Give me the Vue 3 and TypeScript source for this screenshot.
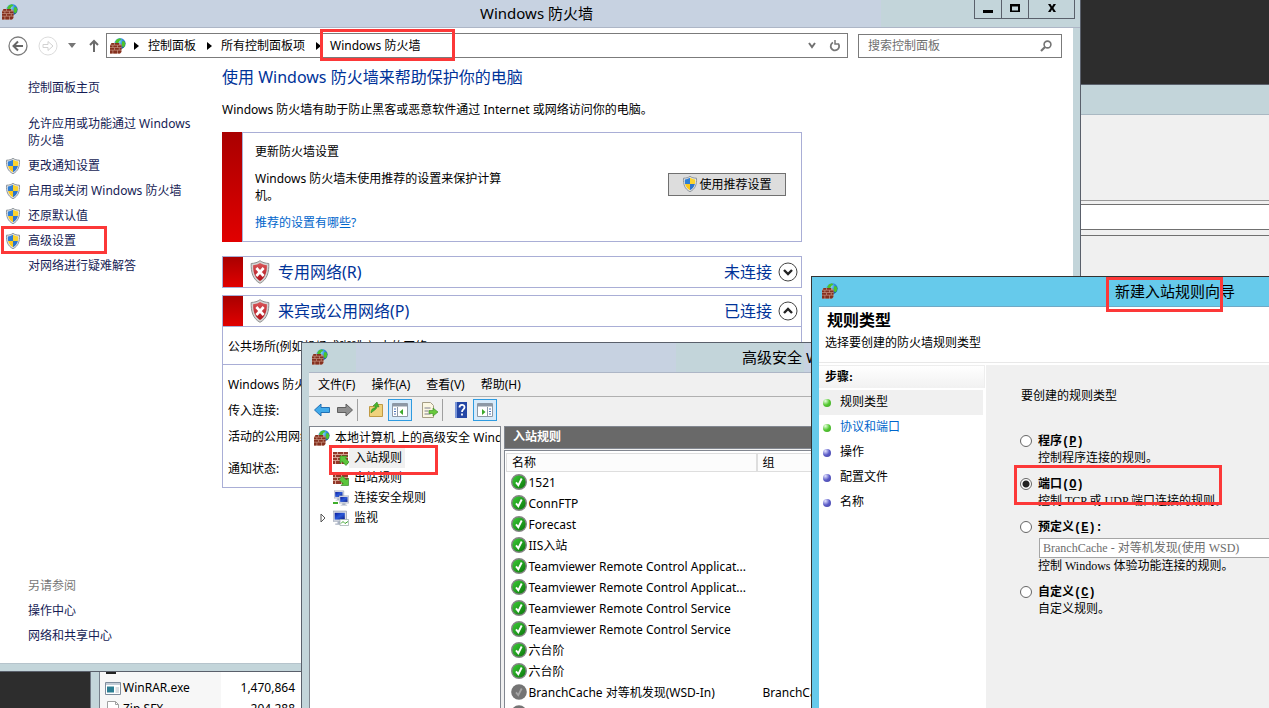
<script setup lang="ts">
import { ref } from 'vue'

interface TaskLink { label: string; shield: boolean }
interface Rule { name: string; group: string; on: boolean }
interface RuleKind { id: string; text: string; key: string; tail: string; note: string }

const tasks: TaskLink[] = [
  { label: '更改通知设置', shield: true },
  { label: '启用或关闭 Windows 防火墙', shield: true },
  { label: '还原默认值', shield: true },
  { label: '高级设置', shield: true },
  { label: '对网络进行疑难解答', shield: false },
]

const menus: string[] = ['文件(F)', '操作(A)', '查看(V)', '帮助(H)']

const rules: Rule[] = [
  { name: '1521', group: '', on: true },
  { name: 'ConnFTP', group: '', on: true },
  { name: 'Forecast', group: '', on: true },
  { name: 'IIS入站', group: '', on: true },
  { name: 'Teamviewer Remote Control Applicat...', group: '', on: true },
  { name: 'Teamviewer Remote Control Applicat...', group: '', on: true },
  { name: 'Teamviewer Remote Control Service', group: '', on: true },
  { name: 'Teamviewer Remote Control Service', group: '', on: true },
  { name: '六台阶', group: '', on: true },
  { name: '六台阶', group: '', on: true },
  { name: 'BranchCache 对等机发现(WSD-In)', group: 'BranchCache - 对等机发现', on: false },
  { name: '', group: '', on: false },
]

const steps: string[] = ['规则类型', '协议和端口', '操作', '配置文件', '名称']

const kinds: RuleKind[] = [
  { id: 'program', text: '程序', key: 'P', tail: '', note: '控制程序连接的规则。' },
  { id: 'port', text: '端口', key: 'O', tail: '', note: '控制 TCP 或 UDP 端口连接的规则。' },
  { id: 'predefined', text: '预定义', key: 'E', tail: ':', note: '控制 Windows 体验功能连接的规则。' },
  { id: 'custom', text: '自定义', key: 'C', tail: '', note: '自定义规则。' },
]
const chosen = ref('port')
const search = ref('')
</script>

<template>
  <div class="desktop">
    <svg class="defs" aria-hidden="true">
      <defs>
        <radialGradient id="g-globe" cx=".35" cy=".3" r=".8"><stop offset="0" stop-color="#9fe4ff" /><stop offset=".5" stop-color="#2f8fe0" /><stop offset="1" stop-color="#123f9a" /></radialGradient>
        <linearGradient id="g-red" x1="0" y1="0" x2="0" y2="1"><stop offset="0" stop-color="#d9575a" /><stop offset="1" stop-color="#b01018" /></linearGradient>
        <linearGradient id="g-green" x1="0" y1="0" x2="1" y2="1"><stop offset="0" stop-color="#3fd03a" /><stop offset="1" stop-color="#087208" /></linearGradient>
        <linearGradient id="g-screen" x1="0" y1="0" x2="1" y2="1"><stop offset="0" stop-color="#0a1c9c" /><stop offset=".5" stop-color="#2a58d8" /><stop offset="1" stop-color="#0c1d86" /></linearGradient>
      </defs>
      <symbol id="firewall" viewBox="0 0 16 16">
        <circle cx="10" cy="5.600" r="5.600" fill="url(#g-globe)" />
        <path d="M5 4L7 1.200l3-1 1.500 1.600-2 1-1 2-2 .7zM12 3.500l2-.6 1.300 2.300-.5 2.600-1.500 2-1.600-2.300z" fill="#4cc32c" />
        <path d="M1.500 5H9l2.500 1.500V14L10 15.500H0V7z" fill="#c08a78" />
        <path d="M1.500 5H4v1.800H1zM4.800 5H9v1.800H4.800zM0 7.500h2.500v1.800H0zM3.300 7.500H7v1.800H3.300zM7.800 7.500h3.700v1.800H7.800zM0 10h4v1.800H0zM4.800 10h4v1.800h-4zM9.600 10h1.900v1.800H9.600zM0 12.500h2.500v3H0zM3.300 12.500H7v3H3.300zM7.800 12.500h3.500V14l-1.300 1.500H7.800z" fill="#85301f" />
      </symbol>
      <symbol id="uac" viewBox="0 0 16 16">
        <path d="M8 .3C6.500 1.600 4 2.200 1.500 2.200 1.200 8 2.500 13 8 15.700c5.500-2.700 6.800-7.700 6.500-13.500C12 2.200 9.500 1.600 8 .3z" fill="#e6e8ea" stroke="#8d949b" stroke-width="1" />
        <path d="M8 1.800C6.600 2.700 5 3.300 2.800 3.400c-.1 1.500 0 3.100.3 4.600H8z" fill="#2f7fd6" />
        <path d="M8 1.800c1.400.9 3 1.500 5.200 1.600.1 1.500 0 3.100-.3 4.600H8z" fill="#fbd32c" />
        <path d="M3.100 8H8v6.300C5.200 12.800 3.700 10.500 3.100 8z" fill="#fbc81c" />
        <path d="M12.900 8H8v6.300c2.800-1.500 4.300-3.800 4.900-6.300z" fill="#2c74cc" />
      </symbol>
      <symbol id="bad" viewBox="0 0 22 24" preserveAspectRatio="none">
        <path d="M11 .7C8.500 2.500 5 3.300 1.300 3.500 1 12 3 19.500 11 23.300c8-3.800 10-11.300 9.700-19.800C17 3.300 13.500 2.500 11 .7z" fill="#d4d4d4" stroke="#8a8a8a" />
        <path d="M11 3C8.800 4.300 6.200 5 3.400 5.300 3.300 12 5 17.800 11 21c6-3.200 7.700-9 7.600-15.700C15.800 5 13.200 4.300 11 3z" fill="url(#g-red)" />
        <path d="M7 8l8 8M15 8l-8 8" stroke="#fff" stroke-width="3" />
      </symbol>
      <symbol id="ok" viewBox="0 0 16 16">
        <circle cx="8" cy="8" r="7.300" fill="url(#g-green)" stroke="#858585" stroke-width="1.400" />
        <path d="M5 8.400l2.300 2.800L10.700 4.500" fill="none" stroke="#fff" stroke-width="1.900" />
      </symbol>
      <symbol id="off" viewBox="0 0 16 16">
        <circle cx="8" cy="8" r="7.800" fill="#747474" />
        <path d="M5 8.400l2.300 2.800L10.700 4.500" fill="none" stroke="#a5a5a5" stroke-width="1.800" />
      </symbol>
      <symbol id="wall" viewBox="0 0 16 16">
        <path d="M0 2h15v12H0z" fill="#d4a090" />
        <path d="M0 2h4v2H0zM5 2h5v2H5zM11 2h4v2h-4zM0 5h2v2H0zM3 5h5v2H3zM9 5h6v2H9zM0 8h4v2H0zM5 8h5v2H5zM11 8h4v2h-4zM0 11h2v3H0zM3 11h5v3H3zM9 11h6v3H9z" fill="#93382a" />
      </symbol>
      <symbol id="pc" viewBox="0 0 16 16">
        <path d="M0 1h12v9H0z" fill="#d9dde6" stroke="#8c96ac" stroke-width=".6" /><path d="M1.500 2.500h9V8.500h-9z" fill="url(#g-screen)" /><path d="M4 10h4v2H4zM2 12h8v1H2z" fill="#a9b2c4" />
      </symbol>
    </svg>

    <section class="back-window" aria-hidden="true">
      <div class="back-title"></div>
      <div class="back-band"></div>
      <div class="back-field"></div>
      <div class="back-band-low"></div>
    </section>

    <section class="files">
      <table>
        <tbody>
          <tr><td class="fname"><svg class="i16" viewBox="0 0 16 16"><path d="M1 4h10v11H1z" fill="#222" /></svg></td><td class="fsize"></td></tr>
          <tr>
            <td class="fname"><svg class="i16" viewBox="0 0 16 16"><path d="M.5 2.500h15v12H.5z" fill="#fff" stroke="#7e8c9c" /><path d="M1 3h14v2H1z" fill="#c3ccd6" /><path d="M2 6.500h7v6H2z" fill="#2d7f94" /><path d="M10.500 8h3.500M10.500 10h3.500M10.500 12h3.500" stroke="#b5bcc4" /></svg><span>WinRAR.exe</span></td>
            <td class="fsize">1,470,864</td>
          </tr>
          <tr>
            <td class="fname"><svg class="i16" viewBox="0 0 16 16"><path d="M2.500.5h8l3 3v12h-11z" fill="#fff" stroke="#a0a0a0" /><path d="M10.500.5v3h3" fill="none" stroke="#a0a0a0" /></svg><span>Zip.SFX</span></td>
            <td class="fsize">204,288</td>
          </tr>
        </tbody>
      </table>
    </section>

    <section class="cp">
      <header class="cp-title">
        <svg class="i16 app"><use href="#firewall" /></svg>
        <h1>Windows 防火墙</h1>
        <div class="winbtns">
          <button aria-label="最小化"><svg viewBox="0 0 12 10"><path d="M1 7h10v3H1z" /></svg></button>
          <button aria-label="最大化"><svg viewBox="0 0 12 10"><path d="M1 1h10v8H1zM3 3.500v4h6v-4z" fill-rule="evenodd" /></svg></button>
          <button class="wide" aria-label="关闭"><svg viewBox="0 0 12 10"><path d="M2 1h2.500L6 3.400 7.500 1H10L7.400 5 10 9H7.500L6 6.600 4.500 9H2l2.600-4z" /></svg></button>
        </div>
      </header>
      <div class="cp-page">
        <nav class="cp-nav">
          <button aria-label="后退"><svg width="20" height="20" viewBox="0 0 20 20" fill="none"><circle cx="10" cy="10" r="9" stroke="#7d7d7d" stroke-width="1.300" /><path d="M15 10H6M10 5.500L5.500 10l4.500 4.500" stroke="#666" stroke-width="2" /></svg></button>
          <button aria-label="前进"><svg width="20" height="20" viewBox="0 0 20 20" fill="none"><circle cx="10" cy="10" r="9" stroke="#dcdcdc" /><path d="M5 8.500h5v-3l5 4.500-5 4.500v-3H5z" stroke="#d2d2d2" /></svg></button>
          <button class="hist" aria-label="历史"><svg width="8" height="5" viewBox="0 0 8 5"><path d="M0 0h8L4 5z" fill="#767676" /></svg></button>
          <button class="up" aria-label="上移"><svg width="10" height="14" viewBox="0 0 10 14" fill="none" stroke="#6b6b6b" stroke-width="2"><path d="M5 13V2M1 6l4-4 4 4" /></svg></button>
          <div class="address">
            <svg class="i16"><use href="#firewall" /></svg>
            <svg class="tri" viewBox="0 0 5 8"><path d="M0 0l5 4-5 4z" /></svg>
            <a href="#">控制面板</a>
            <svg class="tri" viewBox="0 0 5 8"><path d="M0 0l5 4-5 4z" /></svg>
            <a href="#">所有控制面板项</a>
            <svg class="tri" viewBox="0 0 5 8"><path d="M0 0l5 4-5 4z" /></svg>
            <a href="#">Windows 防火墙</a>
            <button class="drop" aria-label="展开"><svg width="8" height="7" viewBox="0 0 8 7" fill="none" stroke="#707070" stroke-width="2"><path d="M1 1l3 4 3-4" /></svg></button>
            <button aria-label="刷新"><svg width="12" height="12" viewBox="0 0 12 12" fill="none" stroke="#777" stroke-width="1.800"><path d="M4 2.500A4.200 4.200 0 1 0 9.500 4" /><path d="M6 0v4h4" stroke-width="1.500" /></svg></button>
          </div>
          <label class="search">
            <input v-model="search" type="text" placeholder="搜索控制面板" aria-label="搜索控制面板" />
            <svg width="12" height="12" viewBox="0 0 12 12" fill="none" stroke="#747474"><circle cx="7.500" cy="4.500" r="3.400" stroke-width="1.600" /><path d="M5 7L1 11" stroke-width="2.200" /></svg>
          </label>
        </nav>

        <div class="cp-body">
          <aside class="side">
            <a href="#" class="home">控制面板主页</a>
            <a href="#" class="allow">允许应用或功能通过 Windows 防火墙</a>
            <a v-for="t in tasks" :key="t.label" href="#" class="task">
              <svg v-if="t.shield" class="i16"><use href="#uac" /></svg><i v-else class="i16"></i>{{ t.label }}
            </a>
            <div class="see">
              <p>另请参阅</p>
              <a href="#">操作中心</a>
              <a href="#">网络和共享中心</a>
            </div>
          </aside>

          <main class="main">
            <h2>使用 Windows 防火墙来帮助保护你的电脑</h2>
            <p class="lead">Windows 防火墙有助于防止黑客或恶意软件通过 Internet 或网络访问你的电脑。</p>
            <div class="alert">
              <div class="bar"></div>
              <div class="alert-text">
                <p>更新防火墙设置</p>
                <p class="warn">Windows 防火墙未使用推荐的设置来保护计算机。</p>
                <a href="#">推荐的设置有哪些?</a>
              </div>
              <button class="use"><svg class="i16"><use href="#uac" /></svg>使用推荐设置</button>
            </div>
            <div class="net">
              <div class="net-head">
                <div class="bar"></div><svg class="bad"><use href="#bad" /></svg><h3>专用网络(R)</h3><span>未连接</span>
                <button aria-label="展开专用网络"><svg viewBox="0 0 20 20" fill="none"><circle cx="10" cy="10" r="9" stroke="#444" /><path d="M6 8l4 4 4-4" stroke="#222" stroke-width="2.400" /></svg></button>
              </div>
            </div>
            <div class="net">
              <div class="net-head">
                <div class="bar"></div><svg class="bad"><use href="#bad" /></svg><h3>来宾或公用网络(P)</h3><span>已连接</span>
                <button aria-label="收起来宾或公用网络"><svg viewBox="0 0 20 20" fill="none"><circle cx="10" cy="10" r="9" stroke="#444" /><path d="M6 12l4-4 4 4" stroke="#222" stroke-width="2.400" /></svg></button>
              </div>
              <p class="place">公共场所(例如机场或咖啡店)中的网络</p>
              <div class="facts">
                <p>Windows 防火墙状态:</p>
                <p>传入连接:</p>
                <p>活动的公用网络:</p>
                <p class="notify">通知状态:</p>
              </div>
            </div>
          </main>
        </div>
      </div>
    </section>

    <section class="mmc">
      <header class="mmc-title"><svg class="i16 app"><use href="#firewall" /></svg><h1>高级安全 Windows 防火墙</h1></header>
      <div class="mmc-page">
        <nav class="menu"><button v-for="m in menus" :key="m">{{ m }}</button></nav>
        <div class="tools">
          <button aria-label="后退"><svg viewBox="0 0 16 16"><path d="M.5 8L7 2v3.500h8.500v5H7V14z" fill="#41aaea" stroke="#2170b5" /></svg></button>
          <button aria-label="前进"><svg viewBox="0 0 16 16"><path d="M15.500 8L9 2v3.500H.5v5H9V14z" fill="#8f8f8f" stroke="#5f5f5f" /></svg></button>
          <i class="rule"></i>
          <button aria-label="上一级"><svg viewBox="0 0 16 16"><path d="M1.500 4.500h5l1.500-2h6.500v12h-13z" fill="#f0d27c" stroke="#c09a44" /><path d="M3 11c0-4 2-5 4-5V3.500L5 4l4-4 2 5-2-.5c0 3-3 3.500-6 6.500z" fill="#46b82d" stroke="#287c1a" stroke-width=".5" /></svg></button>
          <button class="on" aria-label="控制台树"><svg viewBox="0 0 16 16"><path d="M.5 1.500h15v13H.5z" fill="#fff" stroke="#8d98a5" /><path d="M1 2h14v2.500H1z" fill="#8d98a5" /><path d="M5.500 5v9" stroke="#8d98a5" /><path d="M2 7h2M2 9.500h2M2 12h2" stroke="#4a72b8" /><path d="M11 7v6L7.500 10z" fill="#3ca92c" /></svg></button>
          <button class="gap" aria-label="导出列表"><svg viewBox="0 0 16 16"><path d="M.5.500h8l3 3v12H.5z" fill="#fbf7e2" stroke="#a59e85" /><path d="M2.500 6h6M2.500 9h4M2.500 12h6" stroke="#7c7c8e" /><path d="M7 8.500h4V6l5 4-5 4v-2.500H7z" fill="#69c93c" stroke="#368a1e" stroke-width=".6" /></svg></button>
          <i class="rule"></i>
          <button aria-label="帮助"><svg viewBox="0 0 16 16"><path d="M2 0h12v16H2z" fill="#2446a5" /><path d="M2 0h2v16H2z" fill="#7b97d8" /><path d="M6.500 5.500c0-3.500 5-3.500 5-.3 0 2.300-2.500 2-2.500 4.800M9 11.500v2" fill="none" stroke="#fff" stroke-width="1.800" /></svg></button>
          <button class="on" aria-label="操作窗格"><svg viewBox="0 0 16 16"><path d="M.5 1.500h15v13H.5z" fill="#fff" stroke="#8d98a5" /><path d="M1 2h14v2.500H1z" fill="#8d98a5" /><path d="M10.500 5v9" stroke="#8d98a5" /><path d="M12 7h2M12 9.500h2M12 12h2" stroke="#4a72b8" /><path d="M5 7v6l3.500-3z" fill="#3ca92c" /></svg></button>
        </div>
        <div class="panes">
          <div class="tree">
            <button class="root"><svg class="i16"><use href="#firewall" /></svg>本地计算机 上的高级安全 Windows 防火墙</button>
            <button class="leaf picked"><svg class="i16" viewBox="0 0 16 16"><use href="#wall" /><path d="M13 15.500l-4-4-2 2V6h7.500l-2 2 3.500 4z" fill="#5cc53c" stroke="#27801a" stroke-width=".6" /></svg><span>入站规则</span></button>
            <button class="leaf"><svg class="i16" viewBox="0 0 16 16"><use href="#wall" /><path d="M9.500 6l4 4 2-2v7.500H8l2-2-4-4z" fill="#5cc53c" stroke="#27801a" stroke-width=".6" /></svg><span>出站规则</span></button>
            <button class="leaf"><svg class="i16" viewBox="0 0 16 16"><use href="#pc" width="13" height="13" x="1" y="0" /><use href="#pc" width="13" height="13" x="6" y="5" /><path d="M0 12h5v2H0z" fill="#3fae2c" /></svg><span>连接安全规则</span></button>
            <button class="leaf"><svg class="twist" viewBox="0 0 6 10"><path d="M1 1l4 4-4 4z" fill="#fff" stroke="#555" /></svg><svg class="i16" viewBox="0 0 16 16"><use href="#pc" width="18" height="18" /><path d="M7 9.500h8.500v6H7z" fill="#fff" stroke="#9aa" stroke-width=".7" /><path d="M8 13.500l2-2 2 2 3-2" fill="none" stroke="#3da52e" /></svg><span>监视</span></button>
          </div>
          <div class="result">
            <h2>入站规则</h2>
            <div class="list">
              <table>
                <thead><tr><th class="c-name">名称</th><th>组</th></tr></thead>
                <tbody>
                  <tr v-for="(r, n) in rules" :key="n">
                    <td class="c-name"><div><svg class="i16"><use :href="r.on ? '#ok' : '#off'" /></svg><span>{{ r.name }}</span></div></td>
                    <td>{{ r.group }}</td>
                  </tr>
                </tbody>
              </table>
            </div>
          </div>
        </div>
      </div>
    </section>

    <section class="wizard">
      <header class="wiz-title"><svg class="i16 app"><use href="#firewall" /></svg><h1>新建入站规则向导</h1></header>
      <div class="wiz-page">
        <div class="wiz-head"><h2>规则类型</h2><p>选择要创建的防火墙规则类型</p></div>
        <div class="wiz-body">
          <aside class="steps">
            <h3>步骤:</h3>
            <ol>
              <li v-for="(s, n) in steps" :key="s" :class="{ now: n === 0 }">
                <i :class="n < 2 ? 'ball green' : 'ball blue'"></i>
                <a v-if="n === 1" href="#">{{ s }}</a><span v-else>{{ s }}</span>
              </li>
            </ol>
          </aside>
          <form class="form" @submit.prevent>
            <p class="ask">要创建的规则类型</p>
            <div v-for="k in kinds" :key="k.id" class="kind">
              <input :id="k.id" v-model="chosen" type="radio" name="kind" :value="k.id" />
              <div class="kind-text">
                <label :for="k.id">{{ k.text }}(<u>{{ k.key }}</u>){{ k.tail }}</label>
                <select v-if="k.id === 'predefined'" disabled aria-label="预定义规则"><option>BranchCache - 对等机发现(使用 WSD)</option></select>
                <p>{{ k.note }}</p>
              </div>
            </div>
          </form>
        </div>
      </div>
    </section>

    <i class="mark m-address"></i>
    <i class="mark m-advanced"></i>
    <i class="mark m-inbound"></i>
    <i class="mark m-wizard"></i>
    <i class="mark m-port"></i>
  </div>
</template>

<style>
html, body { background: #2d2d2d; overflow: hidden; }
</style>

<style scoped>
.desktop { position: relative; height: 100vh; overflow: hidden; background: #2d2d2d; color: #000; font: 12px/17px "Noto Sans", "Noto Sans CJK SC", sans-serif; }
.desktop * { box-sizing: border-box; }
h1, h2, h3, p, ol { margin: 0; padding: 0; font-weight: 400; }
ol { list-style: none; }
a { text-decoration: none; color: inherit; }
button { font: inherit; color: inherit; background: none; border: 0; padding: 0; margin: 0; display: flex; align-items: center; }
svg { display: block; flex: none; }
table { border-collapse: collapse; border-spacing: 0; }
.defs { position: absolute; width: 0; height: 0; }
.i16 { width: 16px; height: 16px; flex: none; }

.back-window { position: absolute; left: 1080px; top: 84px; right: 0; bottom: 0; background: #f0f0f0; border-top: 1px solid #5a606b; display: flex; flex-direction: column; }
.back-title { height: 30px; background: #c3d5da; border-bottom: 1px solid #a9b8c2; }
.back-band { height: 86px; border-bottom: 1px solid #9a9a9a; }
.back-field { height: 26px; margin-top: 3px; background: #fff; border: 1px solid #707070; border-right: 0; }
.back-band-low { height: 6px; border-bottom: 1px solid #707070; }

.files { position: absolute; left: 90px; right: 900px; bottom: 0; height: 40px; background: #fff; border-left: 1px solid #6f7682; overflow: hidden; display: flex; }
.files::before { content: ""; width: 8px; background: #c3d5da; border-right: 1px solid #77808c; }
.files table { height: 63px; margin-top: -12px; }
.files tr { height: 21px; }
.files td { padding: 0; }
.fname { width: 121px; background: #f7f7f7; white-space: nowrap; }
.fname svg { display: inline-block; vertical-align: middle; margin: 0 2px 0 5px; }
.fname span { vertical-align: middle; }
.fsize { width: 74px; text-align: right; }

.cp { position: absolute; left: 0; top: 0; right: 188px; bottom: 36px; display: flex; flex-direction: column; background: #c3d5da; border: solid #5a606b; border-width: 0 1px 1px 0; padding: 0 7px 7px 0; }
.cp-title { height: 28px; margin-right: -7px; padding-right: 7px; flex: none; position: relative; display: flex; justify-content: center; background: linear-gradient(90deg, #c7d2e1 881px, #c3d5da 881px); border-bottom: 1px solid #adb6c6; }
.cp-title h1, .mmc-title h1, .wiz-title h1 { font-size: 15px; line-height: 26px; white-space: nowrap; }
.app { position: absolute; left: 2px; top: 4px; }
.winbtns { position: absolute; right: 5px; top: 0; height: 19px; display: flex; border: 1px solid #5a606b; border-top: 0; }
.winbtns button { width: 27px; justify-content: center; border-right: 1px solid #5a606b; }
.winbtns .wide { width: 45px; border-right: 0; }
.winbtns svg { width: 12px; height: 10px; margin-bottom: 2px; }
.cp-page { flex: 1; min-height: 0; background: #fff; display: flex; flex-direction: column; border-bottom: 1px solid #b6c4cc; }
.cp-nav { display: flex; align-items: center; height: 25px; margin: 5px 11px 0 8px; }
.cp-nav > button { width: 20px; margin-right: 10px; justify-content: center; }
.cp-nav > .hist { width: 8px; margin: 0 13px 0 0; }
.cp-nav > .up { width: 10px; margin-right: 7px; }
.address { flex: 1; height: 25px; border: 1px solid #7b7b7b; display: flex; align-items: center; padding: 0 6px 0 3px; white-space: nowrap; }
.address a { padding-bottom: 1px; }
.address .i16 { margin-right: -3px; }
.tri { width: 5px; height: 8px; margin: 0 9px 0 11px; }
.address .drop { margin: 0 13px 0 auto; }
.search { display: flex; align-items: center; width: 204px; height: 24px; margin-left: 10px; border: 1px solid #7b7b7b; padding: 0 9px; }
.search input { flex: 1; min-width: 0; border: 0; outline: 0; padding: 0; background: none; font: inherit; }
.search input::placeholder { color: #6f6f6f; opacity: 1; }
.cp-body { flex: 1; min-height: 0; display: flex; }
.side { width: 222px; flex: none; display: flex; flex-direction: column; color: #151c55; padding: 21px 20px 19px 28px; }
.home { margin-bottom: 19px; }
.allow { line-height: 17px; margin-bottom: 4px; }
.task { display: flex; align-items: center; gap: 7px; height: 25px; margin-left: -23px; white-space: nowrap; }
.see { margin-top: auto; display: flex; flex-direction: column; gap: 8px; }
.see p { color: #777; }
.main { width: 580px; padding-top: 6px; display: flex; flex-direction: column; }
.main h2 { color: #039; font-size: 16px; line-height: 26px; }
.lead { margin: 11px 0 14px; white-space: nowrap; }
.alert { display: flex; align-items: center; height: 110px; flex: none; border: 1px solid #a9aed6; border-left: 0; }
.alert .bar { width: 21px; align-self: stretch; margin: -1px 0; border-right: 1px solid #a9aed6; }
.bar { background: linear-gradient(#a90000, #e10000); flex: none; }
.alert-text { width: 262px; margin-left: 12px; display: flex; flex-direction: column; gap: 10px; }
.alert-text a { color: #06c; }
.use { margin: 0 15px 6px auto; height: 23px; width: 118px; justify-content: center; gap: 1px; background: #ddd; border: 1px solid #707070; white-space: nowrap; }
.net { margin-top: 14px; border: 1px solid #a9aed6; flex: none; }
.net + .net { margin-top: 7px; }
.net-head { display: flex; align-items: center; height: 30px; color: #039; font-size: 16px; }
.net-head .bar { width: 20px; align-self: stretch; }
.bad { width: 20px; height: 24px; margin: 0 8px 0 7px; }
.net-head h3 { font-size: 16px; flex: 1; }
.net-head button { width: 20px; margin: 0 3px 0 6px; }
.net-head button svg { width: 20px; height: 20px; }
.place { border: solid #a9aed6; border-width: 1px 0; padding: 11px 5px 9px; }
.facts { padding: 11px 5px 10px; display: flex; flex-direction: column; gap: 9px; }
.notify { margin-top: 6px; }

.mmc { position: absolute; left: 301px; top: 342px; right: -91px; bottom: -20px; display: flex; flex-direction: column; border: 1px solid #5a606b; background: #c3d5da; padding: 0 7px; }
.mmc-title { height: 29px; flex: none; margin: 0 -7px; position: relative; display: flex; justify-content: center; background: linear-gradient(90deg, #c3d5da 54px, #c7d2e1 54px 374px, #c3d5da 374px 502px, #c7d2e1 502px); }
.mmc-title h1 { line-height: 28px; }
.mmc-title .app, .wiz-title .app { left: 10px; top: 6px; }
.mmc-page { flex: 1; min-height: 0; background: #f0f0f0; border-top: 1px solid #adb6c6; display: flex; flex-direction: column; }
.menu { display: flex; gap: 16px; height: 24px; padding-left: 9px; border-bottom: 1px solid #b0b0b0; }
.tools { display: flex; align-items: center; height: 26px; padding-left: 4px; }
.tools button { width: 18px; height: 22px; justify-content: center; margin-right: 5px; }
.tools svg { width: 16px; height: 16px; }
.tools .on { width: 24px; margin-left: -2px; background: #d6eafa; border: 1px solid #2f9be0; }
.tools .gap { margin-left: 4px; }
.rule { width: 1px; height: 22px; background: #a0a0a0; margin: 0 9px 0 -2px; }
.panes { flex: 1; min-height: 0; display: flex; gap: 3px; padding-top: 3px; }
.tree { width: 192px; flex: none; background: #fff; border: 1px solid #828790; overflow: hidden; display: flex; flex-direction: column; }
.tree button { white-space: nowrap; flex: none; height: 20px; }
.tree .root { margin-left: 4px; gap: 5px; height: 21px; }
.leaf { padding-left: 23px; position: relative; }
.leaf span { padding: 0 3px 0 5px; line-height: 20px; }
.picked span { background: #f0f0f0; }
.twist { position: absolute; left: 10px; width: 6px; height: 10px; }
.result { flex: 1; min-width: 0; display: flex; flex-direction: column; }
.result h2 { height: 23px; font-size: 12px; line-height: 20px; padding-left: 8px; color: #fff; font-weight: 700; background: #696969; border: 1px solid #828790; flex: none; }
.list { flex: 1; min-height: 0; margin-top: 1px; background: #fff; border: 1px solid #828790; padding: 2px 0 0 1px; overflow: hidden; }
.list table { width: 100%; table-layout: fixed; }
.list th { height: 18px; line-height: 17px; padding: 0 5px; text-align: left; font-weight: 400; background: #fcfcfc; border: solid #dedede; border-width: 1px 2px 1px 1px; }
.list .c-name { width: 250px; }
.list td { height: 21px; padding: 0 6px; white-space: nowrap; overflow: hidden; }
.list td.c-name { padding: 0 0 0 4px; }
.c-name div { display: flex; align-items: center; gap: 2px; }

.wizard { position: absolute; left: 811px; top: 276px; right: -270px; bottom: -20px; display: flex; flex-direction: column; background: #66caeb; border: 1px solid #333; padding: 0 7px; font-family: "Liberation Serif", "Noto Sans CJK SC", serif; }
.wiz-title { position: relative; height: 29px; flex: none; margin: 0 -7px; display: flex; justify-content: center; }
.wiz-title h1 { line-height: 30px; }
.wiz-page { flex: 1; min-height: 0; background: #fff; border-top: 1px solid #6fa9c6; display: flex; flex-direction: column; }
.wiz-head { height: 56px; padding: 4px 6px 0; border-bottom: 1px solid #e8e8e8; }
.wiz-head h2 { font-size: 16px; font-weight: 700; line-height: 20px; padding-left: 2px; margin-bottom: 4px; }
.wiz-body { flex: 1; min-height: 0; display: flex; padding-top: 2px; }
.steps { width: 167px; flex: none; padding-right: 3px; }
.steps h3 { height: 23px; font-size: 12px; line-height: 22px; font-weight: 700; padding-left: 6px; background: linear-gradient(#fff, #f1f1f1); border: solid #eee; border-width: 1px 1px 0 0; margin-right: -2px; margin-bottom: 2px; }
.steps li { display: flex; align-items: center; height: 25px; padding-left: 4px; gap: 9px; }
.now { background: #f0f0f0; }
.steps a { color: #06c; }
.ball { width: 8px; height: 8px; border-radius: 50%; }
.green { background: radial-gradient(circle at 30% 25%, #e8ffe0, #54c832 50%, #3f9f28); }
.blue { background: radial-gradient(circle at 30% 25%, #e4e4ff, #5c5cc8 50%, #4444a0); }
.form { flex: 1; background: #f0f0f0; padding: 23px 0 0 34px; display: flex; flex-direction: column; gap: 11px; }
.ask { height: 35px; padding-left: 1px; }
.kind { display: flex; gap: 6px; }
.kind input { appearance: none; width: 12px; height: 12px; margin: 1px 0 0; border: 1px solid #666; border-radius: 50%; background: #fff; flex: none; }
.kind input:checked { background: radial-gradient(circle, #222 3px, #fff 4px); }
.kind-text { display: flex; flex-direction: column; flex: 1; }
.kind label { font: 700 12px/16px "Liberation Mono", "Noto Sans CJK SC", monospace; }
.kind p { line-height: 16px; }
.kind select { appearance: none; height: 20px; margin-top: 2px; margin-left: 1px; padding: 0 3px; border: 1px solid #a5a5a5; border-radius: 0; background: #fff; color: #6d6d6d; font: inherit; opacity: 1; }

.mark { position: absolute; border: 3px solid #fc3838; }
.m-address { left: 320px; top: 29px; width: 135px; height: 32px; }
.m-advanced { left: 1px; top: 226px; width: 106px; height: 28px; }
.m-inbound { left: 329px; top: 445px; width: 109px; height: 30px; }
.m-wizard { left: 1106px; top: 277px; width: 117px; height: 35px; }
.m-port { left: 1014px; top: 465px; width: 208px; height: 40px; }
</style>
